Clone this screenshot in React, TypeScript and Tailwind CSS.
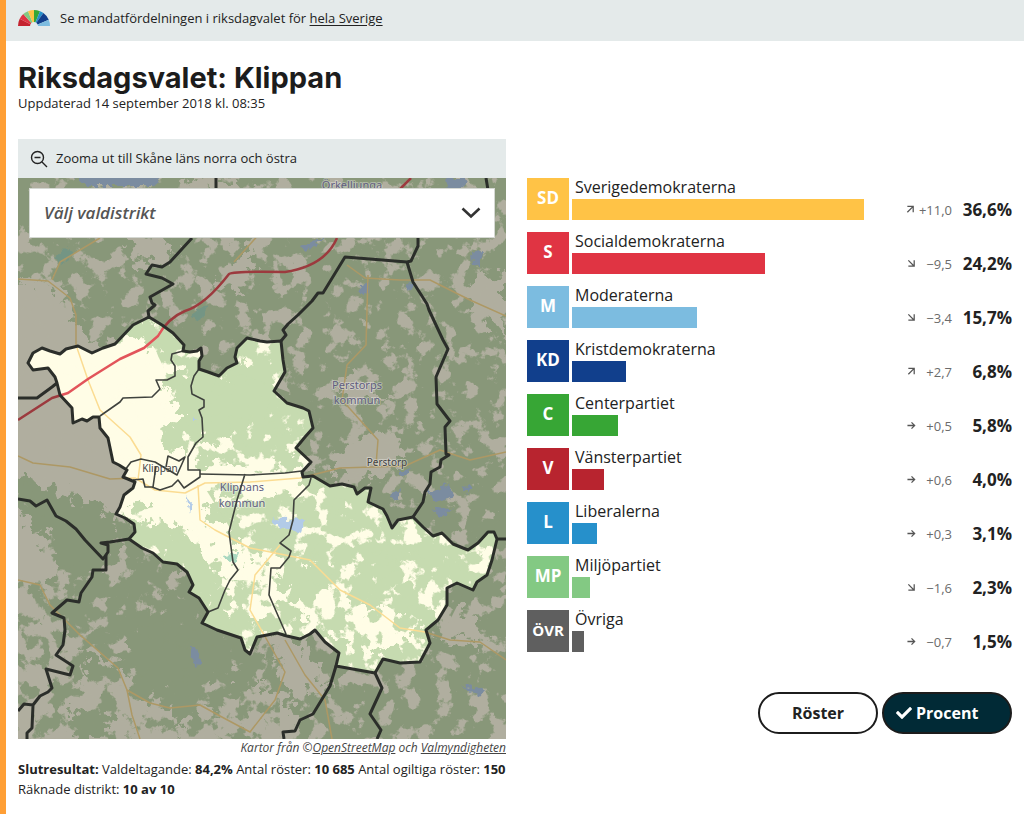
import React from 'react';
import { FaCheck } from 'react-icons/fa';

type Trend = 'up' | 'down' | 'flat';

interface Party {
  short: string;
  name: string;
  share: number;
  change: string;
  trend: Trend;
  color: string;
}

const parties: Party[] = [
  { short: 'SD', name: 'Sverigedemokraterna', share: 36.6, change: '+11,0', trend: 'up', color: 'bg-[#ffc346]' },
  { short: 'S', name: 'Socialdemokraterna', share: 24.2, change: '−9,5', trend: 'down', color: 'bg-[#e03443]' },
  { short: 'M', name: 'Moderaterna', share: 15.7, change: '−3,4', trend: 'down', color: 'bg-[#7cbce0]' },
  { short: 'KD', name: 'Kristdemokraterna', share: 6.8, change: '+2,7', trend: 'up', color: 'bg-[#113f8c]' },
  { short: 'C', name: 'Centerpartiet', share: 5.8, change: '+0,5', trend: 'flat', color: 'bg-[#37a635]' },
  { short: 'V', name: 'Vänsterpartiet', share: 4.0, change: '+0,6', trend: 'flat', color: 'bg-[#b8242f]' },
  { short: 'L', name: 'Liberalerna', share: 3.1, change: '+0,3', trend: 'flat', color: 'bg-[#2690cb]' },
  { short: 'MP', name: 'Miljöpartiet', share: 2.3, change: '−1,6', trend: 'down', color: 'bg-[#83c983]' },
  { short: 'ÖVR', name: 'Övriga', share: 1.5, change: '−0,7', trend: 'flat', color: 'bg-[#5f5f5f]' },
];

const maxShare = Math.max(...parties.map((p) => p.share));

const formatShare = (share: number) => share.toFixed(1).replace('.', ',') + '%';

const trendPaths: Record<Trend, string> = {
  up: 'M1.5 1.5H8V8M8 1.5L1.5 8',
  down: 'M8 1.5V8H1.5M8 8L1.5 1.5',
  flat: 'M0.5 5H8.5M5 1.5L8.5 5L5 8.5',
};

const TrendArrow: React.FC<{ trend: Trend }> = ({ trend }) => (
  <svg viewBox="0 0 10 10" className="size-[9px] shrink-0" fill="none" stroke="#555" strokeWidth="1.4" aria-hidden="true">
    <path d={trendPaths[trend]} />
  </svg>
);

// wedges of the half circle, left to right, in degrees
const fan = [
  { color: '#c4232f', from: 0, to: 27 },
  { color: '#e03443', from: 27, to: 48 },
  { color: '#83c983', from: 48, to: 68 },
  { color: '#ffc346', from: 68, to: 90 },
  { color: '#37a635', from: 90, to: 112 },
  { color: '#2690cb', from: 112, to: 126 },
  { color: '#113f8c', from: 126, to: 157 },
  { color: '#7cbce0', from: 157, to: 180 },
];

const MandateIcon: React.FC = () => {
  const point = (r: number, deg: number) => {
    const a = Math.PI - (deg * Math.PI) / 180;
    return `${(16 + r * Math.cos(a)).toFixed(2)} ${(16 - r * Math.sin(a)).toFixed(2)}`;
  };
  return (
    <svg viewBox="0 0 32 17" className="h-[17px] w-8 shrink-0" aria-hidden="true">
      {fan.map(({ color, from, to }) => (
        <path
          key={color}
          fill={color}
          d={`M${point(4, from)}L${point(16, from)}A16 16 0 0 1 ${point(16, to)}L${point(4, to)}Z`}
        />
      ))}
    </svg>
  );
};

const klippan =
  'M149 317L162 325L173 333L184 345L183 351L190 352L197 351L201 348L202 356L199 361L199 369L208 372L219 376L227 368L237 363L235 357L237 348L247 338L260 341L267 342L281 341L283 360L285 372L274 391L287 403L303 408L309 411L313 428L305 437L296 448L311 462L302 472L303 477L313 476L330 486L342 484L354 487L357 494L365 488L371 488L368 502L383 509L387 516L392 528L398 520L413 517L423 527L433 536L442 533L453 544L468 550L478 543L488 532L494 532L497 539L492 560L487 575L477 582L473 590L457 583L447 588L447 605L438 620L426 630L430 643L420 662L400 663L383 659L375 673L336 666L339 653L325 642L315 630L310 634L300 639L287 636L277 633L257 637L250 654L245 650L241 638L217 630L202 623L208 612L199 598L189 592L193 585L187 572L177 564L163 562L153 553L142 548L129 539L135 532L134 524L125 518L116 514L120 507L124 495L133 488L135 482L123 477L127 470L119 465L113 462L108 438L100 428L99 417L93 417L87 421L82 419L73 423L72 408L60 395L57 383L55 377L48 368L33 370L28 363L33 353L42 348L50 351L60 354L66 349L78 346L86 350L92 353L103 348L115 344L133 325Z';

const municipalBorders = [
  'M216 178V190M192 238L170 262L162 267L152 265L146 274L162 278L173 284L150 297L152 303L155 305L148 311L149 317',
  'M281 341L286 335L283 330L288 324L298 315L312 301L318 293L323 293L345 257L407 262L411 261L418 246V238M486 178L488 190',
  'M407 262L413 282L427 304L429 310L443 340L448 349L436 377L437 404L450 421L445 427L446 454L449 455L441 460L440 467L431 472L430 484L425 492L423 502L413 517',
  'M497 539H507M18 398H37L52 387L57 383',
  'M18 499L30 501L36 506L47 500L56 516L66 521L76 529L85 540L103 559L108 552V545L101 543L110 542L129 539',
  'M106 555V570H93L92 577L81 593L79 602L67 600L52 613L64 618L65 630L63 645L56 655L73 666L70 675L46 669L52 688L48 692L40 696L33 705L24 704L18 711M33 705L32 728L27 733V739',
  'M336 666L330 686L313 714L300 720L295 731L283 732L284 739M375 673L382 688L370 714L381 730L377 739',
];

const districtBorders = [
  'M183 351L172 354L171 360L175 366V376L167 380L156 380L160 389L152 397L123 398L120 402L100 416',
  'M199 369L194 376L191 386L192 394L204 400V407L199 410L202 418L203 437L196 443L188 457V470H200V477L184 488L178 480L172 486L160 490L152 487L145 487L143 479L133 480',
  'M125 470L131 462L141 459L155 462L165 468L177 475L185 457L179 461L168 456L166 467M156 466L153 487',
  'M200 474L250 475L285 473L302 471M245 474L237 500L229 532L233 562L238 570L230 580L225 590L218 608L208 612',
  'M311 478L309 485L294 500L293 520L289 535L280 543L291 551L289 557L280 568H271L269 595L286 634',
];

const minorRoads = [
  'M18 279L48 281L70 298L76 315V345L88 380L100 410L130 437L141 455L138 480',
  'M18 456L33 463L70 467L110 479L135 478L155 490L185 493L205 483L250 482L300 478L340 468L405 466L440 450L470 460L506 452',
  'M347 265L365 278L400 280L430 280L470 300L506 316M368 275L366 345L347 365L342 400L378 440L376 465',
  'M198 485L200 520L215 530L250 548L310 560L340 590L370 605L400 628L425 632L450 640L480 642L506 660',
  'M18 580L40 585L50 605L80 635L118 668L127 690L150 703L170 708L200 705L220 716L250 732L275 700L285 672L250 610L255 575L280 545',
  'M285 640L305 675L325 700L332 739M127 690L132 715L140 739M234 262L290 200M52 280L60 262L100 238',
];

const Terrain: React.FC = () => (
  <g>
    <rect x="18" y="178" width="488" height="561" fill="#c6dbb0" />
    {/* open farmland, edges roughened by the displacement filter */}
    <g fill="#fffde6" filter="url(#rough)">
      <path d="M-10 285L55 282L75 320L95 345L133 330L160 345L178 362L160 385L190 410L155 440L200 465L305 468L300 490L225 505L240 560L300 555L350 600L425 622L410 645L345 650L290 600L250 625L205 545L140 500L125 520L60 490L-10 470Z" />
      <path d="M-10 500L20 510L55 580L40 620L70 640L120 665L140 700L230 712L235 690L275 690L300 720L290 760L-10 760Z" />
      <path d="M125 235L175 240L165 265L130 262ZM235 262L265 235L240 290L215 285ZM340 448L385 430L410 455L370 480L330 475ZM185 178L245 178L240 195L190 190Z" />
      <path d="M260 630L300 642L335 690L290 695ZM430 600L470 615L490 645L435 640ZM460 285L506 275L506 335L475 315ZM355 375L392 395L355 405L333 385Z" />
    </g>
    <rect x="18" y="178" width="488" height="561" fill="#fffde6" filter="url(#fields)" />
    {/* woods that break up the farmland */}
    <g fill="#c6dbb0" filter="url(#rough)">
      <path d="M18 472L58 490L108 512L120 540L100 575L60 565Z" />
      <path d="M120 515L150 525L200 545L220 590L208 610L185 575Z" />
      <path d="M205 605L240 615L235 640L205 625Z" />
      <path d="M192 375L240 375L270 350L275 400L230 440L200 435L170 400Z" />
      <path d="M205 510L238 495L230 520L210 522Z" />
      <path d="M145 610L200 620L235 650L200 695L140 690L130 640Z" />
      <path d="M275 575L320 560L335 590L290 600Z" />
      <path d="M85 655L115 670L85 675ZM70 710L110 715L105 739L75 739ZM165 705L190 702L180 735Z" />
      <path d="M125 335L150 320L185 345L160 350Z" />
    </g>
    <path
      fill="#c6dbb0"
      filter="url(#woods)"
      d="M18 580H280V739H18ZM150 340L310 400L310 468L200 440ZM200 480L500 520L430 660L300 640Z"
    />
    <g fill="#b2cbe8" filter="url(#shore)">
      <path d="M74 175H160L155 186H84ZM300 246L325 238L305 252ZM445 178H466L462 190H448ZM472 252L482 250L480 268L473 264Z" />
      <path d="M360 284L369 283L367 297L359 296ZM405 284L414 285L411 292ZM395 470L412 470L405 477ZM388 494L400 490L398 502ZM428 492L450 485L456 497L435 502ZM460 488L472 485L470 494ZM433 510L452 508L440 518ZM272 518L305 520L303 533L280 528Z" />
      <path d="M190 648L197 648L202 665L194 664ZM462 685L486 690L480 697ZM192 415L198 418L194 422ZM186 494L192 506L190 514Z" />
    </g>
    <g fill="#a9d8c0" filter="url(#shore)">
      <path d="M54 260L66 247L74 254L60 264ZM190 316L208 305L200 320ZM222 555L240 553L234 564Z" />
    </g>
  </g>
);

const DistrictMap: React.FC = () => (
  <svg
    viewBox="18 178 488 561"
    className="block h-auto w-full"
    fill="none"
    strokeLinejoin="round"
    role="img"
    aria-label="Karta över valdistrikten i Klippans kommun"
  >
    <defs>
      <filter id="rough" x="-10%" y="-10%" width="120%" height="120%" colorInterpolationFilters="sRGB">
        <feTurbulence type="fractalNoise" baseFrequency="0.08" numOctaves="4" seed="4" />
        <feDisplacementMap in="SourceGraphic" scale="36" xChannelSelector="R" yChannelSelector="G" />
      </filter>
      <filter id="shore" x="-10%" y="-10%" width="120%" height="120%" colorInterpolationFilters="sRGB">
        <feTurbulence type="fractalNoise" baseFrequency="0.15" numOctaves="2" seed="7" />
        <feDisplacementMap in="SourceGraphic" scale="10" xChannelSelector="R" yChannelSelector="G" />
      </filter>
      <filter id="fields" x="0" y="0" width="1" height="1" colorInterpolationFilters="sRGB">
        <feTurbulence type="fractalNoise" baseFrequency="0.055" numOctaves="5" seed="11" />
        <feColorMatrix values="0 0 0 0 0  0 0 0 0 0  0 0 0 0 0  0 0 0 14 -7.6" result="noise" />
        <feComposite in="SourceGraphic" in2="noise" operator="in" />
      </filter>
      <filter id="woods" x="0" y="0" width="1" height="1" colorInterpolationFilters="sRGB">
        <feTurbulence type="fractalNoise" baseFrequency="0.06" numOctaves="5" seed="23" />
        <feColorMatrix values="0 0 0 0 0  0 0 0 0 0  0 0 0 0 0  0 0 0 14 -7.4" result="noise" />
        <feComposite in="SourceGraphic" in2="noise" operator="in" />
      </filter>
    </defs>

    <Terrain />

    <g stroke="#fbdc92" strokeWidth="1.5">
      {minorRoads.map((d) => (
        <path key={d} d={d} />
      ))}
    </g>
    <path
      d="M18 420L52 398L68 393L88 379L120 359L144 348L158 336Q168 318 185 311Q205 305 229 274Q234 271 285 272Q325 266 337 238M399 190L411 178"
      stroke="#e2545a"
      strokeWidth="2.5"
    />

    {/* everything outside the municipality is dimmed */}
    <path d={`M18 178H506V739H18Z${klippan}`} fill="#000" fillOpacity="0.31" fillRule="evenodd" />

    <g
      fill="#625e80"
      stroke="#fff"
      strokeOpacity="0.35"
      strokeWidth="2"
      paintOrder="stroke"
      fontFamily="Noto Sans, sans-serif"
      fontSize="11"
      textAnchor="middle"
    >
      <text x="352" y="189">Örkelljunga</text>
      <text x="357" y="389">Perstorps</text>
      <text x="357" y="404">kommun</text>
      <text x="242" y="491">Klippans</text>
      <text x="242" y="507">kommun</text>
      <g fill="#444" fontSize="10">
        <text x="387" y="466">Perstorp</text>
        <text x="160" y="472">Klippan</text>
      </g>
    </g>

    <g stroke="#3f423d" strokeWidth="1.6">
      {districtBorders.map((d) => (
        <path key={d} d={d} />
      ))}
    </g>
    <g stroke="#2b2e2a" strokeWidth="3">
      {municipalBorders.map((d) => (
        <path key={d} d={d} />
      ))}
      <path d={klippan} />
    </g>
  </svg>
);

const PartyRow: React.FC<{ party: Party }> = ({ party }) => (
  <li className="flex gap-[3px]">
    <div
      className={`flex size-[42px] shrink-0 items-center justify-center pb-[2px] font-bold text-white ${party.color} ${
        party.short.length > 2 ? 'text-[15px]' : 'text-[17px]'
      }`}
    >
      {party.short}
    </div>
    <div className="min-w-0 flex-1">
      <div className="h-[21px] pl-[3px] text-base leading-[18px]">{party.name}</div>
      <div className="flex h-[21px] items-center">
        <div className="h-full flex-1">
          <div className={`h-full ${party.color}`} style={{ width: `${(party.share / maxShare) * 100}%` }} />
        </div>
        <div className="flex h-5 w-[148px] items-center justify-end leading-5">
          <TrendArrow trend={party.trend} />
          <span className="ml-1 min-w-8 text-right text-[13px] text-[#6b6b6b]">{party.change}</span>
          <span className="w-[60px] text-right text-[17px] font-bold">{formatShare(party.share)}</span>
        </div>
      </div>
    </div>
  </li>
);

const App: React.FC = () => {
  return (
    <div className="min-h-screen border-l-[6px] border-[#ff9f35] bg-white font-['Open_Sans',sans-serif] text-[#222]">
      <div className="flex h-[41px] items-center gap-[10px] bg-[#e4eaea] px-3 pb-1 text-[13px]">
        <MandateIcon />
        <p>
          Se mandatfördelningen i riksdagvalet för{' '}
          <a href="#" className="underline underline-offset-2">
            hela Sverige
          </a>
        </p>
      </div>

      <main className="px-3 pt-5">
        <h1 className="font-['Inter',sans-serif] text-[29px] font-bold leading-[34px] text-[#1c1c1c]">
          Riksdagsvalet: Klippan
        </h1>
        <p className="text-[13px] leading-4">Uppdaterad 14 september 2018 kl. 08:35</p>

        <div className="mt-7 grid grid-cols-[488fr_485fr] gap-[21px]">
          <section>
            <button type="button" className="flex h-[39px] w-full items-center gap-2 bg-[#e4eaea] px-3 text-[13px]">
              <svg viewBox="0 0 18 18" className="size-[18px]" fill="none" stroke="#222" strokeWidth="1.4" aria-hidden="true">
                <circle cx="7.5" cy="7.5" r="6" />
                <path d="M4.5 7.5H10.5M12 12L17 17" />
              </svg>
              Zooma ut till Skåne läns norra och östra
            </button>
            <div className="relative">
              <DistrictMap />
              <div className="absolute inset-x-[11px] top-[10px]">
                <select
                  aria-label="Välj valdistrikt"
                  className="h-[50px] w-full appearance-none border border-[#d5d8d3] bg-white px-[14px] text-[17px] font-semibold italic text-[#555]"
                >
                  <option>Välj valdistrikt</option>
                </select>
                <svg viewBox="0 0 20 12" className="pointer-events-none absolute right-[14px] top-[19px] h-3 w-5" fill="none" stroke="#333" strokeWidth="2.6" aria-hidden="true">
                  <path d="M1.5 1.5L10 9.5L18.5 1.5" />
                </svg>
              </div>
            </div>
            <p className="text-right text-xs italic leading-[18px] text-[#444]">
              Kartor från ©
              <a href="#" className="underline">OpenStreetMap</a> och{' '}
              <a href="#" className="underline">Valmyndigheten</a>
            </p>
            <p className="mt-[2px] text-[13px] leading-5">
              <b>Slutresultat:</b> Valdeltagande: <b>84,2%</b> Antal röster: <b>10 685</b> Antal ogiltiga röster: <b>150</b>
              <br />
              Räknade distrikt: <b>10 av 10</b>
            </p>
          </section>

          <section className="pt-[39px]">
            <ul className="flex flex-col gap-3">
              {parties.map((party) => (
                <PartyRow key={party.short} party={party} />
              ))}
            </ul>
            <div className="mt-10 flex justify-end gap-1 text-base font-bold">
              <button type="button" className="h-[42px] w-[120px] rounded-full border-2 border-[#1c1c1c] bg-white">
                Röster
              </button>
              <button
                type="button"
                aria-pressed="true"
                className="flex h-[42px] w-[130px] items-center gap-1 rounded-full border-2 border-[#1c1c1c] bg-[#012a36] pl-3 text-white"
              >
                <FaCheck aria-hidden="true" />
                Procent
              </button>
            </div>
          </section>
        </div>
      </main>
    </div>
  );
};

export default App;
